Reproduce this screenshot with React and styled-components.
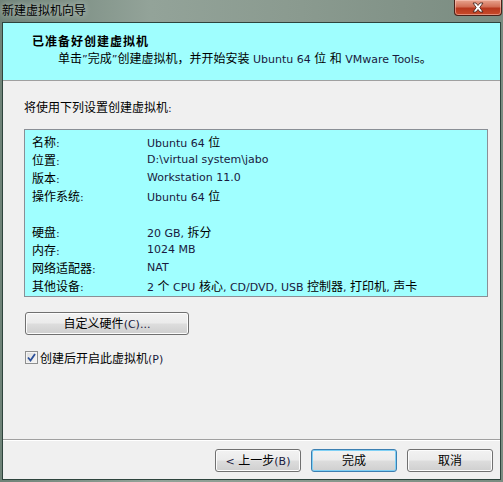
import React from 'react';
import styled, { createGlobalStyle } from 'styled-components';

const GlobalStyle = createGlobalStyle`
  html, body {
    margin: 0;
    padding: 0;
    overflow: hidden;
  }
  body {
    font-family: "DejaVu Sans", "Noto Sans CJK SC", sans-serif;
    font-size: 11px;
    color: #1a1a40;
  }
`;

const Window = styled.div`
  width: 503px;
  height: 482px;
  box-sizing: border-box;
  display: flex;
  flex-direction: column;
  background: linear-gradient(90deg, #6f8378 0%, #93a399 30%, #8a9a8f 60%, #7a8c81 100%);
  overflow: hidden;
`;

const TitleBar = styled.div`
  height: 22px;
  display: flex;
  align-items: flex-start;
  flex-shrink: 0;
`;

const Title = styled.span`
  font-family: "Noto Sans CJK SC", sans-serif;
  font-size: 12px;
  line-height: 20px;
  color: #000;
  padding-left: 2px;
  text-shadow: 0 0 6px rgba(255, 255, 255, 0.7);
`;

const CloseButton = styled.div`
  margin-left: auto;
  margin-right: 1px;
  width: 48px;
  height: 16px;
  box-sizing: border-box;
  border: 1px solid #4a2018;
  border-top: none;
  border-radius: 0 0 4px 4px;
  background: linear-gradient(180deg, #e7a48f 0%, #d26e55 45%, #b7381e 55%, #c84a2a 100%);
  display: flex;
  align-items: center;
  justify-content: center;
  box-shadow: inset 0 0 0 1px rgba(255, 210, 200, 0.5);
`;

const Client = styled.div`
  flex: 1;
  margin: 0 2px 2px 2px;
  border: 1px solid #2e443d;
  background: #f0f0f0;
  display: flex;
  flex-direction: column;
  min-height: 0;
`;

const Header = styled.div`
  flex-shrink: 0;
  height: 58px;
  box-sizing: border-box;
  background: #9ffefe;
  border-bottom: 1px solid #a0a0a0;
  padding: 10px 0 0 29px;
`;

const HeaderTitle = styled.div`
  font-family: "Noto Sans CJK SC", sans-serif;
  font-weight: bold;
  font-size: 12px;
  letter-spacing: 1px;
  line-height: 16px;
  color: #000;
`;

const HeaderSub = styled.div`
  margin: 1px 0 0 26px;
  line-height: 16px;
  white-space: nowrap;
`;

const Han = styled.span`
  font-family: "Noto Sans CJK SC", sans-serif;
  font-size: 12px;
  color: #000;
`;

const Body = styled.div`
  flex: 1;
  display: flex;
  flex-direction: column;
  padding: 18px 0 0 21px;
`;

const Intro = styled.div`
  line-height: 16px;
`;

const Summary = styled.div`
  margin-top: 12px;
  width: 464px;
  height: 168px;
  box-sizing: border-box;
  background: #a0ffff;
  border: 1px solid #8a8f96;
  padding: 3px 0 0 7px;
`;

const Row = styled.div`
  display: grid;
  grid-template-columns: 115px 1fr;
  height: 18px;
  line-height: 18px;
  white-space: nowrap;
`;

const Button = styled.button`
  height: 23px;
  width: ${({ wide }) => (wide ? '164px' : '86px')};
  box-sizing: border-box;
  border: 1px solid ${({ isDefault }) => (isDefault ? '#3c7fb1' : '#707070')};
  border-radius: 3px;
  background: linear-gradient(180deg, #f2f2f2 0%, #ebebeb 48%, #dddddd 52%, #cfcfcf 100%);
  box-shadow: inset 0 0 0 1px ${({ isDefault }) => (isDefault ? '#7fd0f5' : '#fcfcfc')};
  font-family: "DejaVu Sans", "Noto Sans CJK SC", sans-serif;
  font-size: 11px;
  color: #1a1a40;
  padding: 0;
  line-height: 19px;
  text-align: center;
  white-space: pre;
`;

const CustomRow = styled.div`
  margin-top: 15px;
  padding-left: 1px;
`;

const CheckRow = styled.label`
  margin-top: 15px;
  display: flex;
  align-items: center;
  gap: 2px;
  padding-left: 1px;
  height: 14px;
`;

const CheckBox = styled.span`
  width: 13px;
  height: 13px;
  box-sizing: border-box;
  border: 1px solid #8e8f8f;
  background: linear-gradient(135deg, #dcdcdc 0%, #f6f6f6 100%);
  box-shadow: inset 0 0 0 1px #f4f4f4;
  display: flex;
  align-items: center;
  justify-content: center;
`;

const Footer = styled.div`
  margin-top: auto;
  margin-left: -21px;
  border-top: 1px solid #a0a0a0;
  box-shadow: inset 0 1px 0 #ffffff;
  padding: 9px 7px 7px 0;
  display: flex;
  justify-content: flex-end;
  gap: 10px;
`;

const CJK = /([\u3000-\u303f\u4e00-\u9fff\uff00-\uffef]+)/;

function Mixed({ text }) {
  return text
    .split(CJK)
    .map((part, i) => (CJK.test(part) ? <Han key={i}>{part}</Han> : part));
}

const settings = [
  ['名称:', 'Ubuntu 64 位'],
  ['位置:', 'D:\\virtual system\\jabo'],
  ['版本:', 'Workstation 11.0'],
  ['操作系统:', 'Ubuntu 64 位'],
  ['', ''],
  ['硬盘:', '20 GB, 拆分'],
  ['内存:', '1024 MB'],
  ['网络适配器:', 'NAT'],
  ['其他设备:', '2 个 CPU 核心, CD/DVD, USB 控制器, 打印机, 声卡'],
];

function CloseIcon() {
  return (
    <svg width="14" height="11" viewBox="0 0 14 11">
      <path
        d="M2 1 L5 1 L7 3.5 L9 1 L12 1 L8.8 5.5 L12 10 L9 10 L7 7.5 L5 10 L2 10 L5.2 5.5 Z"
        fill="#ffffff"
        stroke="#3a1a14"
        strokeWidth="0.8"
      />
    </svg>
  );
}

function CheckMark() {
  return (
    <svg width="9" height="9" viewBox="0 0 9 9">
      <path d="M1 4.5 L3.5 7.5 L8 1" fill="none" stroke="#2a4f9a" strokeWidth="1.8" />
    </svg>
  );
}

export default function App() {
  return (
    <>
      <GlobalStyle />
      <Window>
        <TitleBar>
          <Title>新建虚拟机向导</Title>
          <CloseButton>
            <CloseIcon />
          </CloseButton>
        </TitleBar>
        <Client>
          <Header>
            <HeaderTitle>已准备好创建虚拟机</HeaderTitle>
            <HeaderSub>
              <Mixed text={'单击\u201d完成\u201d创建虚拟机，并开始安装 Ubuntu 64 位 和 VMware Tools。'} />
            </HeaderSub>
          </Header>
          <Body>
            <Intro>
              <Mixed text="将使用下列设置创建虚拟机:" />
            </Intro>
            <Summary>
              {settings.map(([label, value], i) => (
                <Row key={i}>
                  <span>
                    <Mixed text={label} />
                  </span>
                  <span>
                    <Mixed text={value} />
                  </span>
                </Row>
              ))}
            </Summary>
            <CustomRow>
              <Button wide>
                <Mixed text="自定义硬件(C)..." />
              </Button>
            </CustomRow>
            <CheckRow>
              <CheckBox>
                <CheckMark />
              </CheckBox>
              <span>
                <Mixed text="创建后开启此虚拟机(P)" />
              </span>
            </CheckRow>
            <Footer>
              <Button>
                <Mixed text="< 上一步(B)" />
              </Button>
              <Button isDefault>
                <Mixed text="完成" />
              </Button>
              <Button>
                <Mixed text="取消" />
              </Button>
            </Footer>
          </Body>
        </Client>
      </Window>
    </>
  );
}
